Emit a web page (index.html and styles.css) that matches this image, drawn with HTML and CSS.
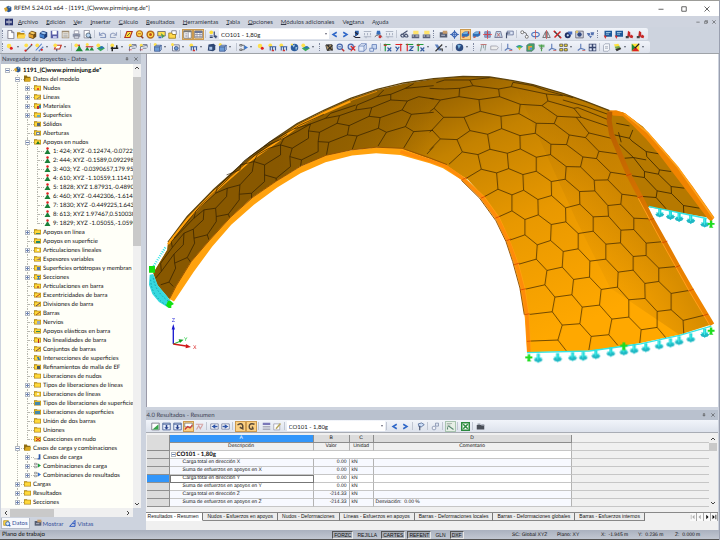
FILE: index.html
```html
<!DOCTYPE html>
<html lang="es">
<head>
<meta charset="utf-8">
<title>RFEM 5.24.01 x64</title>
<link rel="stylesheet" href="styles.css">
</head>
<body>
<svg class="defs" aria-hidden="true">
<symbol id="app" viewBox="0 0 12 12"><path fill="#2b5690" d="M3 3 7 1l4 2v6L7 11 3 9z"/><path fill="#d7a430" d="M0 5l4-2 2 5-4 2z"/><path fill="#8fb7dc" d="M6 3l2-1 2 1-2 2z"/></symbol>
<symbol id="mdi" viewBox="0 0 12 12"><path fill="#26316e" d="M0 1h12v10H0z"/><path stroke="#fff" d="M6 2v8M2 6h8M3 4v4M9 4v4"/></symbol>
<symbol id="new" viewBox="0 0 12 12"><path fill="#fff" stroke="#667" d="M2.500.5h5l3 3v8h-8z"/><path fill="none" stroke="#667" d="M7.500.5v3h3"/></symbol>
<symbol id="open" viewBox="0 0 12 12"><path fill="#b8860b" d="M0 3h4l1 1h5v7H0z"/><path fill="#ffd64d" d="M2 6h10l-2 5H0z"/><path fill="none" stroke="#3b6fc4" d="M6 2q3-2 4 1"/></symbol>
<symbol id="box" viewBox="0 0 12 12"><path fill="#6c4a16" d="M1 4l4-3 6 2v6l-4 3-6-2z"/><path fill="#e5a22e" d="M1 5l6 2v4l-6-2z"/><path fill="#f8cb62" d="M2 4l3-2 5 2-3 2z"/></symbol>
<symbol id="boxb" viewBox="0 0 12 12"><path fill="#1c3c78" d="M1 4l4-3 6 2v6l-4 3-6-2z"/><path fill="#4381cf" d="M1 5l6 2v4l-6-2z"/><path fill="#9cc3ef" d="M2 4l3-2 5 2-3 2z"/></symbol>
<symbol id="save" viewBox="0 0 12 12"><path fill="#5b5fa8" d="M1 1h10v10H1z"/><path fill="#fff" d="M3 1h6v5H3z"/><path fill="#c4c7ea" d="M4 8h5v3H4z"/></symbol>
<symbol id="clip" viewBox="0 0 12 12"><path fill="#9c8a70" d="M1 1h10v10H1z"/><path fill="#f5f1e8" d="M2 3h8v7H2z"/><path stroke="#9a9a9a" d="M3 5h6M3 7h6M3 9h6"/></symbol>
<symbol id="print" viewBox="0 0 12 12"><path fill="#fff" stroke="#889" d="M3 1h6v4H3z"/><path fill="#8b93a8" d="M1 5h10v4H1z"/><path fill="#dfe4f0" stroke="#778" d="M3 8h6v3H3z"/></symbol>
<symbol id="prev" viewBox="0 0 12 12"><path fill="#fff" stroke="#778" d="M1.500.5h7v10h-7z"/><circle cx="7" cy="7" r="3" fill="#b7d4f2" stroke="#456"/><path stroke="#345" stroke-width="2" d="M9 9l2 2"/></symbol>
<symbol id="undo" viewBox="0 0 12 12"><path fill="none" stroke="#8b9bc0" stroke-width="1.500" d="M2 3v4h4M2 7q4-5 8-1v4H3"/></symbol>
<symbol id="redo" viewBox="0 0 12 12"><path fill="none" stroke="#9aa7c4" stroke-width="1.500" d="M10 3v4H6M10 7Q6 2 2 6v4h7"/></symbol>
<symbol id="para" viewBox="0 0 12 12"><path fill="#ffe23a" stroke="#b03020" stroke-width="1.500" d="M4 2h7L8 10H1z"/><path stroke="#334" d="M4 8l4-4"/></symbol>
<symbol id="find" viewBox="0 0 12 12"><circle cx="6" cy="5" r="4" fill="#ffe04a" stroke="#b86a20" stroke-width="1.500"/><path stroke="#8a3a20" stroke-width="2" d="M8 8l3 3"/><path stroke="#a33" d="M4 5h4"/></symbol>
<symbol id="dat" viewBox="0 0 12 12"><path fill="#ffd84a" stroke="#b08a1a" d="M1 2.500h7v7H1z"/><circle cx="7" cy="7" r="3" fill="#d8ecfa" stroke="#3a6ab8" stroke-width="1.500"/><path stroke="#3a6ab8" stroke-width="2" d="M9 9l2 2"/></symbol>
<symbol id="ring" viewBox="0 0 12 12"><circle cx="6" cy="6" r="4.500" fill="#ffe04a" stroke="#b86a20" stroke-width="2"/><circle cx="6" cy="6" r="2" fill="#c24a20"/></symbol>
<symbol id="scr" viewBox="0 0 12 12"><path fill="#ffe04a" stroke="#556" d="M1 2h10v6H1z"/><path fill="#4a9a50" d="M5 4l5 4-3 3z"/><path fill="#3a68c0" d="M2 9h4v2H2z"/></symbol>
<symbol id="fold" viewBox="0 0 12 12"><path fill="#fff" stroke="#667" d="M5 1h6v5H5z"/><path fill="#ffd84a" stroke="#98740e" d="M1 4h4l1 2h4v5H1z"/></symbol>
<symbol id="win" viewBox="0 0 12 12"><path fill="#fff" stroke="#666" d="M1 1h10v10H1z"/><path fill="#777" d="M1 1h10v2H1z"/><path stroke="#889" d="M3 5h3M3 7h3M3 9h3M7 3v8"/></symbol>
<symbol id="tbl" viewBox="0 0 12 12"><path fill="#fff" stroke="#667" d="M1 1.500h10v9H1z"/><path fill="#6b7697" d="M1 1h10v3H1z"/><path stroke="#889" d="M1 6h10M1 8.500h10M4 4v6M8 4v6"/></symbol>
<symbol id="lc" viewBox="0 0 12 12"><circle cx="3" cy="3" r="2.500" fill="#ffdf36"/><path fill="none" stroke="#33456e" stroke-width="1.500" d="M7 2v7h4M9 7v4M1 8h4M1 10h4"/></symbol>
<symbol id="lt" viewBox="0 0 12 12"><path fill="none" stroke="#2d66c8" stroke-width="2" d="M9 3L4 6l5 3"/></symbol>
<symbol id="gt" viewBox="0 0 12 12"><path fill="none" stroke="#2d66c8" stroke-width="2" d="M3 3l5 3-5 3"/></symbol>
<symbol id="res" viewBox="0 0 12 12"><path fill="#2c5fa8" d="M4 1h5v4L6 8H4z"/><path fill="none" stroke="#223" stroke-width="1.500" d="M2 8l3 2h6M4 3l4 3"/></symbol>
<symbol id="val" viewBox="0 0 12 12"><path fill="none" stroke="#9aa3b4" d="M1 2h10M2 4v3M6 4v3M10 4v3M1 9h10M4 9v2"/></symbol>
<symbol id="eye" viewBox="0 0 12 12"><path fill="#356dba" d="M4 1h4l1 5H3z"/><path fill="none" stroke="#333" d="M1 9q5-5 10 0"/><circle cx="8" cy="9" r="2" fill="#c33"/></symbol>
<symbol id="glas" viewBox="0 0 12 12"><path fill="none" stroke="#44506e" stroke-width="1.500" d="M1 7q2-3 4 0t-3 2zM6 7q2-3 4 0t-3 2zM4 5l6-4"/></symbol>
<symbol id="calc" viewBox="0 0 12 12"><path fill="#ffe36a" d="M3 1h7v5H3z"/><path fill="#59617a" d="M1 6h10v5H1z"/><path stroke="#fff" d="M2 8h2M6 8h4"/></symbol>
<symbol id="dark" viewBox="0 0 12 12"><path fill="#555e72" d="M1 3h10v7H1z"/><path fill="#c79b68" d="M5 1h6v4H5z"/><path stroke="#dde" d="M3 7h5"/></symbol>
<symbol id="node" viewBox="0 0 12 12"><path fill="#cfe0fa" stroke="#3561b2" stroke-width="1.500" d="M6 2l4 4-4 4-4-4z"/><path stroke="#3561b2" d="M6 0v12M0 6h12"/></symbol>
<symbol id="surf" viewBox="0 0 12 12"><path fill="#2f6fb8" d="M1 5l4-3h6v5L8 9H1z"/><path fill="#8cc4ea" d="M2 5l3-2h5L8 5z"/><path fill="none" stroke="#c0392b" stroke-width="1.500" d="M2 10l3-1M10 2v3"/></symbol>
<symbol id="grid" viewBox="0 0 12 12"><path fill="#33498c" d="M2 2h8v8H2z"/><path stroke="#e44" d="M0 6h12M6 0v12"/><path fill="#cde" d="M3 3h2v2H3zM7 3h2v2H7zM3 7h2v2H3zM7 7h2v2H7z"/></symbol>
<symbol id="warp" viewBox="0 0 12 12"><path fill="#bcd6e8" stroke="#668" d="M3 2h6l2 8H1z"/><path fill="none" stroke="#c55" d="M4 4l4 5M8 4L4 9"/></symbol>
<symbol id="flag" viewBox="0 0 12 12"><path fill="#dfe8f8" stroke="#55648c" d="M3 1.500h8v5H3z"/><path fill="none" stroke="#44506e" stroke-width="1.500" d="M2 11V4h5"/></symbol>
<symbol id="move" viewBox="0 0 12 12"><circle cx="3" cy="3" r="2" fill="#fff" stroke="#555"/><circle cx="9" cy="9" r="2" fill="#fff" stroke="#555"/><path fill="none" stroke="#555" d="M5 3q4 0 4 4"/></symbol>
<symbol id="rot" viewBox="0 0 12 12"><ellipse cx="6" cy="6" rx="5" ry="3" fill="none" stroke="#4a74c0" stroke-width="1.500"/><path stroke="#c44" d="M6 0v12"/></symbol>
<symbol id="mir" viewBox="0 0 12 12"><path fill="#e8e8f2" stroke="#555" d="M5 2v8H1zM7 2v8h4z"/><path stroke="#c44" d="M6 0v12"/></symbol>
<symbol id="xx" viewBox="0 0 12 12"><path stroke="#444" stroke-width="2" d="M2 2l8 8"/><path stroke="#d32222" stroke-width="2" d="M10 2l-8 8M1 1l2 2M9 9l2 2"/></symbol>
<symbol id="ball" viewBox="0 0 12 12"><circle cx="5" cy="7" r="4" fill="#1d2e63"/><path fill="#456bc0" d="M5 2h6v4H7z"/><circle cx="5" cy="7" r="1.500" fill="#cde"/></symbol>
<symbol id="cam" viewBox="0 0 12 12"><path fill="#d8dbe4" stroke="#556" d="M1 1.500h10v9H1z"/><circle cx="6" cy="6" r="3" fill="#334a80"/><path fill="#e2c66a" d="M1 1h3v3H1z"/></symbol>
<symbol id="tri" viewBox="0 0 12 12"><path fill="#5673b0" d="M1 4h4l1 3-3 1zM6 3h5l-1 4H7zM4 8h4l-2 3z"/></symbol>
<symbol id="mod" viewBox="0 0 12 12"><path fill="#1e5a9a" d="M2 1h10v8H2z"/><path fill="#bfe0f4" d="M4 3h6v1H4zM4 5h4v1H4z"/><path fill="#c33" d="M1 7l4 1-2 4z"/></symbol>
<symbol id="modr" viewBox="0 0 12 12"><path fill="#c62828" d="M4 1l3 2v6H3zM8 6l3 2-1 3-4-1z"/><path fill="#444" d="M1 8h4v3H1z"/></symbol>
<symbol id="nd" viewBox="0 0 12 12"><circle cx="4" cy="4" r="3" fill="#ffe04a"/><circle cx="7" cy="7" r="2" fill="#d22"/></symbol>
<symbol id="ln" viewBox="0 0 12 12"><circle cx="3" cy="3" r="2.500" fill="#ffe04a"/><path stroke="#5a6172" stroke-width="1.500" d="M2 11l9-9"/><circle cx="2" cy="10" r="1.500" fill="#d22"/><circle cx="10" cy="2" r="1" fill="#d22"/></symbol>
<symbol id="ln2" viewBox="0 0 12 12"><circle cx="3" cy="3" r="2.500" fill="#ffe04a"/><path stroke="#5b82c8" stroke-width="1.500" d="M1 10l8-9M5 11l6-6"/><circle cx="9" cy="9" r="1.500" fill="#d22"/></symbol>
<symbol id="srf" viewBox="0 0 12 12"><path fill="#fff" stroke="#c0392b" stroke-width="1.500" d="M4 3h7L9 8H2z"/><circle cx="3" cy="3" r="2.500" fill="#ffe04a"/><path stroke="#44506e" stroke-width="1.500" d="M5 8v3"/></symbol>
<symbol id="sup" viewBox="0 0 12 12"><circle cx="3" cy="3" r="2.500" fill="#ffe04a"/><path fill="#1f8a3a" d="M7 2l2 5 3 4H2l3-4z"/><path stroke="#d33" stroke-width="1.500" d="M5 3h3"/></symbol>
<symbol id="sup2" viewBox="0 0 12 12"><circle cx="3" cy="2" r="2" fill="#ffe04a"/><path fill="#1f8a3a" d="M3 5l3 5H0zM9 5l3 5H6z"/><path stroke="#c33" stroke-width="1.500" d="M1 5h10"/></symbol>
<symbol id="sup3" viewBox="0 0 12 12"><circle cx="3" cy="3" r="2.500" fill="#ffe04a"/><path fill="#3aa85a" d="M1 7l6-3 5 3-6 4z"/><path fill="#2a73b8" d="M4 6l4-2 3 2-4 2z"/></symbol>
<symbol id="bar" viewBox="0 0 12 12"><circle cx="3" cy="3" r="2.500" fill="#ffe04a"/><path stroke="#222" stroke-width="2" d="M1 7h10M3 5v6M9 3v4"/></symbol>
<symbol id="dim" viewBox="0 0 12 12"><circle cx="3" cy="3" r="2" fill="#ffe04a"/><path fill="none" stroke="#59617a" d="M2 11V5l9-2v3M5 7h5M5 2h6"/><path stroke="#c44" d="M1 9h4"/></symbol>
<symbol id="cube" viewBox="0 0 12 12"><circle cx="3" cy="2" r="2" fill="#ffe04a"/><path fill="#6c9ad4" stroke="#3d5990" d="M2 5h7v6H2z"/><path fill="#b9d2f0" stroke="#3d5990" d="M2 5l2-2h7L9 5zM9 5l2-2v6l-2 2z"/></symbol>
<symbol id="cub3" viewBox="0 0 12 12"><path fill="#2e4672" d="M2 2l7-1 2 2v6l-3 2-7-1z"/><path fill="#a9c5e8" d="M3 5h4v4H3z"/></symbol>
<symbol id="gen" viewBox="0 0 12 12"><path fill="#f4f6fb" stroke="#59617a" d="M2 2.500h9v8H2z"/><circle cx="2" cy="2" r="2" fill="#ffe04a"/><circle cx="7" cy="7" r="2.500" fill="#6c9ad4" stroke="#334a80"/></symbol>
<symbol id="load" viewBox="0 0 12 12"><circle cx="3" cy="3" r="2.500" fill="#ffe04a"/><path fill="none" stroke="#3b5d9c" stroke-width="1.500" d="M2 5h9M3 5v5M6 5v5M10 5v5"/><path fill="#c33" d="M5 9h3v2H5z"/></symbol>
<symbol id="comb" viewBox="0 0 12 12"><path fill="none" stroke="#555" d="M1 2h3v2H1zM1 8h3v2H1zM4 3h3v6H4"/><path fill="#3a74c8" d="M7 3l5 3-5 3z"/></symbol>
<symbol id="globe" viewBox="0 0 12 12"><circle cx="6" cy="6" r="5" fill="#2c5c9c"/><path fill="#a8d0e8" d="M3 3l4-1-2 4zM7 6l3-1-2 5z"/><path fill="#ffe04a" d="M1 1h3v2H1z"/></symbol>
<symbol id="mesh" viewBox="0 0 12 12"><path fill="#b89a6a" stroke="#333" d="M1 3l8-1 1 7-7 1z"/><path stroke="#333" stroke-width="1.500" d="M2 2l8 8M10 3l-7 7M5 2v8"/></symbol>
<symbol id="zoom" viewBox="0 0 12 12"><circle cx="5" cy="5" r="3.500" fill="#cfe2fa" stroke="#4a66a8" stroke-width="1.500"/><path stroke="#b33" stroke-width="2" d="M8 8l3 3"/><path stroke="#34508c" d="M3 5h4"/></symbol>
<symbol id="zoomx" viewBox="0 0 12 12"><circle cx="5" cy="5" r="3.500" fill="#cfe2fa" stroke="#4a66a8" stroke-width="1.500"/><path stroke="#d22" stroke-width="1.500" d="M5 4l6 6M11 4L5 11"/></symbol>
<symbol id="wire" viewBox="0 0 12 12"><path fill="#e6edfa" stroke="#5b78b4" d="M1 4h7v7H1zM4 1h7v7M1 4l3-3M8 4l3-3M8 11l3-3"/></symbol>
<symbol id="wire2" viewBox="0 0 12 12"><path fill="#c6d5f0" stroke="#5b78b4" d="M4 2h6v6H4z"/><path fill="#dfe8f8" stroke="#5b78b4" d="M1 7h5v4H1z"/></symbol>
<symbol id="vx" viewBox="0 0 12 12"><path stroke="#1f9a3a" stroke-width="1.500" d="M3 1v10M1 2h9"/><path stroke="#d22" stroke-width="1.500" d="M1 3h4"/><path stroke="#345a9c" stroke-width="1.500" d="M6 6l5 5M11 6l-5 5"/></symbol>
<symbol id="vy" viewBox="0 0 12 12"><path stroke="#d22" stroke-width="1.500" d="M2 2h9M9 1v10"/><path stroke="#345a9c" stroke-width="1.500" d="M2 5l3 3M7 5l-4 6"/></symbol>
<symbol id="vz" viewBox="0 0 12 12"><path stroke="#1f9a3a" stroke-width="1.500" d="M1 2h10"/><path stroke="#d22" stroke-width="1.500" d="M3 1v10"/><path fill="none" stroke="#345a9c" stroke-width="1.500" d="M6 5h5l-5 5h5"/></symbol>
<symbol id="pen" viewBox="0 0 12 12"><path fill="#5c7fbc" d="M1 2h4l5 8H6z"/><path fill="none" stroke="#333" stroke-width="1.500" d="M2 11l9-9M8 8h3v3"/></symbol>
<symbol id="vis" viewBox="0 0 12 12"><path fill="none" stroke="#2d57c0" stroke-width="1.500" d="M1 11L9 2v9zM5 7h4"/></symbol>
<symbol id="sph" viewBox="0 0 12 12"><circle cx="6" cy="6" r="5" fill="#2d4b80"/><path fill="#79b2dc" d="M3 2l5 1-3 5z"/></symbol>
<symbol id="fr" viewBox="0 0 12 12"><path fill="none" stroke="#9aa" stroke-width="1.500" d="M2 11l2-9h5l-1 8M6 2v5"/><path stroke="#c66" d="M2 2h8"/></symbol>
<symbol id="lbl" viewBox="0 0 12 12"><path fill="#eee" stroke="#9a9aa4" d="M1 4h8l2 2-2 3H1z"/></symbol>
<symbol id="axs" viewBox="0 0 12 12"><path fill="none" stroke="#5f7cb8" stroke-width="1.500" d="M5 1v6l6 2M5 7l-4 3"/><path stroke="#c55" d="M7 10h4"/></symbol>
<symbol id="rain" viewBox="0 0 12 12"><path fill="#3f74d8" d="M1 5q5-5 10 0L6 7z"/><path fill="#38b86a" d="M2 5l4-2 4 2-4 3z"/><path fill="#e8c22c" d="M4 6h4l-2 4z"/></symbol>
<symbol id="rain2" viewBox="0 0 12 12"><path fill="#44a368" stroke="#58757a" d="M1 3l3-2h7v7l-3 3H1z"/><path fill="#f0a030" d="M3 4h5v5H3z"/><path fill="#4a8ee0" d="M5 6h3v3H5z"/></symbol>
<symbol id="tre" viewBox="0 0 12 12"><path stroke="#4aa04a" stroke-width="1.500" d="M6 2v9M2 3h8M3 5h7"/><path stroke="#777" d="M4 7h4"/></symbol>
<symbol id="four" viewBox="0 0 12 12"><path fill="#ffe23a" stroke="#444" d="M1 1.500h4v3H1zM7 1.500h4v3H7zM1 7.500h4v3H1zM7 7.500h4v3H7z"/></symbol>
<symbol id="fourb" viewBox="0 0 12 12"><path fill="#37456e" d="M1 1h10v10H1z"/><path fill="#dfe6f6" d="M2 2h3v3H2zM7 2h3v3H7zM2 7h3v3H2zM7 7h3v3H7z"/></symbol>
<symbol id="sheet" viewBox="0 0 12 12"><path fill="#f4f6fa" stroke="#98a0b0" d="M2 3l2-2h6v8l-2 2H2z"/><path stroke="#98a0b0" d="M4 5h4M4 7h4"/></symbol>
<symbol id="hide" viewBox="0 0 12 12"><path stroke="#99a8a0" d="M1 2h7M1 4h5M1 6h4"/><path fill="none" stroke="#5b8a74" stroke-width="1.500" d="M2 10V7M3 5l7 5"/></symbol>
<symbol id="lay" viewBox="0 0 12 12"><path fill="#ffe23a" d="M1 2l6-1 2 3-6 1z"/><path fill="#333" d="M3 8l6-3 2 3-6 3z"/><path fill="#7aa84a" d="M2 5l6-1 2 2-6 2z"/></symbol>
<symbol id="col" viewBox="0 0 12 12"><path fill="#ffe23a" d="M1 1h10v10H1z"/><path fill="#1d8a3a" d="M1 1v10l5-5z"/><path fill="#d22" d="M1 11l5-6 5 6z"/><path stroke="#222" stroke-width="1.500" d="M5 7l6-6"/></symbol>
<symbol id="xls" viewBox="0 0 12 12"><path fill="#2b8a3e" d="M0 0h12v12H0z"/><path fill="#fff" d="M2 2h8v8H2z"/><path stroke="#2b8a3e" stroke-width="2" d="M3 3l6 6M9 3L3 9"/></symbol>
<symbol id="rep" viewBox="0 0 12 12"><path fill="#4a4f58" d="M1 4h10v6H1z"/><path fill="#9aa0ac" d="M2 2h4v2H2zM7 3h4v2H7z"/></symbol>
<symbol id="tgr" viewBox="0 0 12 12"><path fill="#fff" stroke="#667" d="M1 1.500h10v9H1z"/><path fill="#37a34a" d="M2 10l8-7v7z"/></symbol>
<symbol id="tdn" viewBox="0 0 12 12"><path fill="#e8eefb" stroke="#34508c" d="M1 1.500h10v9H1z"/><path stroke="#34508c" d="M1 3h10"/><path fill="#26418c" d="M5 4h2v3h2l-3 3-3-3h2z"/></symbol>
<symbol id="tcur" viewBox="0 0 12 12"><path fill="#fff" stroke="#777" d="M1 1.500h10v5H1z"/><path fill="none" stroke="#c33" stroke-width="1.500" d="M1 10l4-4 3 2 3-4"/></symbol>
<symbol id="tfad" viewBox="0 0 12 12"><path fill="none" stroke="#d4a0a0" stroke-width="1.500" d="M1 3h10M2 10l3-5 2 4 3-5"/></symbol>
<symbol id="tll" viewBox="0 0 12 12"><path fill="#fff" stroke="#6b7697" d="M1 2.500h10v7H1z"/><path fill="#2e55a8" d="M7 3v6L2 6zM7 5h3v2H7z"/></symbol>
<symbol id="trr" viewBox="0 0 12 12"><path fill="#fff" stroke="#6b7697" d="M1 2.500h10v7H1z"/><path fill="#2e55a8" d="M5 3v6l5-3zM2 5h3v2H2z"/></symbol>
<symbol id="mouse" viewBox="0 0 12 12"><path fill="none" stroke="#5a4a38" stroke-width="2" d="M2 4q6-4 7 1v4L5 7"/></symbol>
<symbol id="mous2" viewBox="0 0 12 12"><path fill="none" stroke="#5a4a38" stroke-width="2" d="M10 3Q3 1 3 6q0 5 5 3L7 6"/></symbol>
<symbol id="rows" viewBox="0 0 12 12"><path fill="#7a78b8" d="M1 1h10v3H1z"/><path stroke="#99a" d="M1 6h10M1 8h10M1 10h10"/></symbol>
<symbol id="edit" viewBox="0 0 12 12"><path fill="#fff" stroke="#99a" d="M1 2.500h8v8H1z"/><path stroke="#b8a860" stroke-width="2" d="M4 9l6-7"/></symbol>
<symbol id="filt" viewBox="0 0 12 12"><path fill="#cfe0f8" stroke="#4a6290" d="M3 2.500q5-3 8 1l-4 3H4z"/><path stroke="#44506e" stroke-width="1.500" d="M5 5v6"/></symbol>
<symbol id="link" viewBox="0 0 12 12"><path fill="#dfe6f4" stroke="#7d8ba8" d="M6 1.500h4v4H6z"/><circle cx="4" cy="8" r="2.500" fill="#f2f4fa" stroke="#7d8ba8"/></symbol>
<symbol id="fd" viewBox="0 0 12 12"><path fill="#a87f10" d="M0 2h5l1 1h6v8H0z"/><path fill="#ffd93b" d="M1 4h10v6H1z"/></symbol>
<symbol id="fdo" viewBox="0 0 12 12"><path fill="#8f6d10" d="M0 1h5l1 2h5v8H0z"/><path fill="#d9a91f" d="M3 5h9l-2 6H1z"/></symbol>
<symbol id="ns" viewBox="0 0 12 14"><path fill="#1a8038" d="M6 4l3 5 3 5H0l3-5z"/><circle cx="6" cy="3" r="2.500" fill="#e02020"/></symbol>
<symbol id="cas" viewBox="0 0 12 12"><path stroke="#777" d="M0 10h6"/><path fill="#2d57a8" d="M8 2h3v9H6V9h2z"/></symbol>
<symbol id="cmg" viewBox="0 0 14 12"><path fill="#fff" stroke="#555" d="M1 1.500h4v3H1zM1 7.500h4v3H1zM6 3h2v6H6"/><path fill="#19a03a" d="M8 2l6 4-6 4z"/></symbol>
<symbol id="cmb" viewBox="0 0 14 12"><path fill="#fff" stroke="#555" d="M1 1.500h4v3H1zM1 7.500h4v3H1zM6 3h2v6H6"/><path fill="#2f6fd0" d="M8 2l6 4-6 4z"/></symbol>
<symbol id="mincap" viewBox="0 0 12 12"><path stroke="#333" stroke-width="1.500" d="M1 6.500h10"/></symbol>
<symbol id="maxcap" viewBox="0 0 12 12"><path fill="none" stroke="#333" stroke-width="1.500" d="M1.500 1.500h9v9h-9z"/></symbol>
<symbol id="rescap" viewBox="0 0 12 12"><path fill="none" stroke="#444" stroke-width="1.500" d="M3 4V2h8v6H9M1 5h8v5H1z"/></symbol>
<symbol id="clscap" viewBox="0 0 12 12"><path stroke="#333" stroke-width="1.500" d="M1 1l10 10M11 1L1 11"/></symbol>
<symbol id="pin" viewBox="0 0 12 12"><path fill="none" stroke="#555" stroke-width="1.500" d="M3 2h6M4 2v5h4V2M2 7h8M6 7v4"/></symbol>
<symbol id="arr" viewBox="0 0 12 12"><path fill="#1fd8d8" d="M4 0h4v5h3L6 12 1 5h3z"/><path fill="#20b8c4" d="M0 7l6-1 6 1-2 3-4 1-4-1z"/><path fill="#58eeee" d="M5 1h1v7H5z"/></symbol>
<symbol id="crs" viewBox="0 0 12 12"><path fill="#1fdc1f" d="M4 0h4v4h4v3H8v3l2 2H3l1-5H0V4h4z"/></symbol>
</svg>

<header class="title"><svg class="i"><use href="#app"/></svg><h1>RFEM 5.24.01 x64 - [1191_(C)www.pirminjung.de*]</h1>
<div class="caps"><button aria-label="Minimizar"><svg><use href="#mincap"/></svg></button><button aria-label="Maximizar"><svg><use href="#maxcap"/></svg></button><button aria-label="Cerrar"><svg><use href="#clscap"/></svg></button></div></header>
<nav class="menu"><svg class="i"><use href="#mdi"/></svg>
<button><u>A</u>rchivo</button><button><u>E</u>dición</button><button><u>V</u>er</button><button><u>I</u>nsertar</button><button><u>C</u>álculo</button><button><u>R</u>esultados</button><button><u>H</u>erramientas</button><button><u>T</u>abla</button><button><u>O</u>pciones</button><button><u>M</u>ódulos adicionales</button><button>Ve<u>n</u>tana</button><button>A<u>y</u>uda</button>
<div class="caps mdi"><button aria-label="Minimizar modelo"><svg><use href="#mincap"/></svg></button><button aria-label="Restaurar modelo"><svg><use href="#rescap"/></svg></button><button aria-label="Cerrar modelo"><svg><use href="#clscap"/></svg></button></div></nav>

<div class="bars">
<div class="bar" role="toolbar" aria-label="Estándar"><i class="grip"></i>
<button aria-label="Nuevo"><svg><use href="#new"/></svg></button><button aria-label="Abrir"><svg><use href="#open"/></svg></button><button aria-label="Proyecto"><svg><use href="#box"/></svg></button><button aria-label="Bloques"><svg><use href="#boxb"/></svg></button><button aria-label="Guardar"><svg><use href="#save"/></svg></button><button aria-label="Portapapeles"><svg><use href="#clip"/></svg></button><button aria-label="Imprimir"><svg><use href="#print"/></svg></button><button aria-label="Vista previa"><svg><use href="#prev"/></svg></button><i class="sep"></i><button aria-label="Deshacer"><svg><use href="#undo"/></svg></button><button aria-label="Rehacer"><svg><use href="#redo"/></svg></button><i class="sep"></i><button aria-label="Plano"><svg><use href="#para"/></svg></button><button aria-label="Buscar"><svg><use href="#find"/></svg></button><button aria-label="Rueda"><svg><use href="#ring"/></svg></button><button aria-label="Pantalla"><svg><use href="#scr"/></svg></button><button aria-label="Carpeta"><svg><use href="#fold"/></svg></button><i class="sep"></i><button class="on" aria-label="Navegador"><svg><use href="#win"/></svg></button><button class="on" aria-label="Tablas"><svg><use href="#tbl"/></svg></button><i class="sep"></i><button aria-label="Caso nuevo"><svg><use href="#lc"/></svg></button>
<div class="combo"><select aria-label="Caso de carga"><option>CO101 - 1,80g</option></select></div>
<button aria-label="Anterior"><svg><use href="#lt"/></svg></button><button aria-label="Siguiente"><svg><use href="#gt"/></svg></button><button aria-label="Resultados"><svg><use href="#res"/></svg></button><button aria-label="Valores"><svg><use href="#val"/></svg></button><button aria-label="Ver"><svg><use href="#eye"/></svg></button><button aria-label="Escala"><svg><use href="#val"/></svg></button><i class="sep"></i><button aria-label="Gafas"><svg><use href="#glas"/></svg></button><button aria-label="Calcular"><svg><use href="#calc"/></svg></button><button aria-label="Calcular todo"><svg><use href="#calc"/></svg></button><i class="sep grip"></i><button aria-label="Panel"><svg><use href="#dark"/></svg></button><button aria-label="Rejilla"><svg><use href="#node"/></svg></button><button class="on" aria-label="Sólido"><svg><use href="#surf"/></svg></button><button aria-label="Superficie"><svg><use href="#surf"/></svg></button><button aria-label="Malla"><svg><use href="#grid"/></svg></button><button aria-label="Deformar"><svg><use href="#warp"/></svg></button><button aria-label="Marca"><svg><use href="#flag"/></svg></button><i class="sep"></i><button aria-label="Mover"><svg><use href="#move"/></svg></button><button aria-label="Girar"><svg><use href="#rot"/></svg></button><button aria-label="Simetría"><svg><use href="#mir"/></svg></button><button aria-label="Dividir"><svg><use href="#xx"/></svg></button><button aria-label="Esfera"><svg><use href="#ball"/></svg></button><button aria-label="Cámara"><svg><use href="#cam"/></svg></button><button aria-label="Grupo"><svg><use href="#tri"/></svg></button><i class="sep grip"></i><button aria-label="Módulo 1"><svg><use href="#mod"/></svg></button><button aria-label="Módulo 2"><svg><use href="#mod"/></svg></button><button aria-label="Módulo 3"><svg><use href="#modr"/></svg></button><button aria-label="Módulo 4"><svg><use href="#modr"/></svg></button></div>

<div class="bar tight" role="toolbar" aria-label="Insertar"><i class="grip"></i>
<button class="dd" aria-label="Nudo"><svg><use href="#nd"/></svg></button><button aria-label="Línea"><svg><use href="#ln"/></svg></button><button class="dd" aria-label="Barra"><svg><use href="#ln2"/></svg></button><button class="dd" aria-label="Superficie"><svg><use href="#srf"/></svg></button><i class="sep"></i><button aria-label="Apoyo nudo"><svg><use href="#sup"/></svg></button><button aria-label="Apoyo línea"><svg><use href="#sup2"/></svg></button><button aria-label="Apoyo superficie"><svg><use href="#sup3"/></svg></button><i class="sep"></i><button class="dd" aria-label="Sección"><svg><use href="#bar"/></svg></button><button aria-label="Cota"><svg><use href="#dim"/></svg></button><button aria-label="Línea guía"><svg><use href="#dim"/></svg></button><i class="sep"></i><button class="dd" aria-label="Sólido nuevo"><svg><use href="#cube"/></svg></button><button class="dd" aria-label="Generar"><svg><use href="#gen"/></svg></button><button class="dd" aria-label="Carga nodal"><svg><use href="#load"/></svg></button><button aria-label="Cubo"><svg><use href="#cub3"/></svg></button><button class="dd" aria-label="Copiar"><svg><use href="#cube"/></svg></button><i class="sep"></i><button class="dd" aria-label="Combinación"><svg><use href="#comb"/></svg></button><button aria-label="Carga"><svg><use href="#nd"/></svg></button><button aria-label="Carga de línea"><svg><use href="#load"/></svg></button><button aria-label="Carga de barra"><svg><use href="#load"/></svg></button><button aria-label="Carga de superficie"><svg><use href="#globe"/></svg></button><button class="dd" aria-label="Carga libre"><svg><use href="#sup3"/></svg></button><i class="sep grip"></i><button aria-label="Generar malla"><svg><use href="#mesh"/></svg></button><button aria-label="Acercar"><svg><use href="#zoom"/></svg></button><button aria-label="Ver todo"><svg><use href="#zoomx"/></svg></button><button aria-label="Isométrica"><svg><use href="#wire"/></svg></button><button aria-label="Perspectiva"><svg><use href="#wire2"/></svg></button><i class="sep"></i><button aria-label="Vista X"><svg><use href="#vx"/></svg></button><button aria-label="Vista Y"><svg><use href="#vy"/></svg></button><button aria-label="Vista Z"><svg><use href="#vz"/></svg></button><button class="dd" aria-label="Vista -X"><svg><use href="#vx"/></svg></button><button class="dd" aria-label="Lápiz"><svg><use href="#pen"/></svg></button><i class="sep"></i><button class="dd" aria-label="Representación"><svg><use href="#sph"/></svg></button><i class="sep grip"></i><button aria-label="Marco"><svg><use href="#fr"/></svg></button><button aria-label="Etiqueta"><svg><use href="#lbl"/></svg></button><i class="sep"></i><button aria-label="Ejes"><svg><use href="#axs"/></svg></button><button aria-label="Isobandas"><svg><use href="#rain"/></svg></button><button aria-label="Isosólidos"><svg><use href="#rain2"/></svg></button><button aria-label="Árbol"><svg><use href="#tre"/></svg></button><button aria-label="Plano de corte"><svg><use href="#axs"/></svg></button><button class="dd" aria-label="Ventanas"><svg><use href="#four"/></svg></button><button aria-label="Origen"><svg><use href="#axs"/></svg></button><button aria-label="Cuadrícula"><svg><use href="#fourb"/></svg></button><i class="sep"></i><button aria-label="Hoja"><svg><use href="#sheet"/></svg></button><button class="dd" aria-label="Capas"><svg><use href="#lay"/></svg></button><button class="dd" aria-label="Colores"><svg><use href="#col"/></svg></button></div>
</div>

<main class="work">
<aside class="navi">
<div class="phead"><h2>Navegador de proyectos - Datos</h2><svg><use href="#pin"/></svg><svg><use href="#clscap"/></svg></div>
<div class="treebox">
<div class="tree">
<ul class="root"><li><button class="ex minus" aria-label="Contraer"></button><svg><use href="#app"/></svg><b>1191_(C)www.pirminjung.de*</b>
<ul>
<li><button class="ex minus" aria-label="Contraer"></button><svg><use href="#fdo"/></svg>Datos del modelo
<ul>
<li><button class="ex" aria-label="Expandir"></button><svg><use href="#fd"/><circle cx="4" cy="5" r="1" fill="#d22"/></svg>Nudos</li>
<li><button class="ex" aria-label="Expandir"></button><svg><use href="#fd"/><path stroke="#876" d="M3 6l4-3"/></svg>Líneas</li>
<li><button class="ex" aria-label="Expandir"></button><svg><use href="#fd"/><path fill="#b33" d="M3 4h2v3H3z"/><path fill="#38a" d="M5 3h2v3H5z"/></svg>Materiales</li>
<li><button class="ex" aria-label="Expandir"></button><svg><use href="#fd"/><path fill="#6ab" d="M3 4h3v2H3z"/></svg>Superficies</li>
<li><svg><use href="#fd"/><path fill="#567" d="M3 3h3v3H3z"/></svg>Sólidos</li>
<li><svg><use href="#fd"/><path fill="#789" d="M2 3h4v3H2z"/><path fill="#ffd" d="M3 4h2v1H3z"/></svg>Aberturas</li>
<li><button class="ex minus" aria-label="Contraer"></button><svg><use href="#fd"/><path fill="#272" d="M4 3l2 3H2z"/></svg>Apoyos en nudos
<ul>
<li><svg><use href="#ns"/></svg>1: 424; XYZ -0.12474,-0.0722758</li>
<li><svg><use href="#ns"/></svg>2: 444; XYZ -0.1589,0.0922984,5</li>
<li><svg><use href="#ns"/></svg>3: 403; YZ -0.0390657,179.956 °,</li>
<li><svg><use href="#ns"/></svg>4: 610; XYZ -1.10559,1.11417,44</li>
<li><svg><use href="#ns"/></svg>5: 1828; XYZ 1.87931,-0.489018,</li>
<li><svg><use href="#ns"/></svg>6: 460; XYZ -0.442306,-1.61422,</li>
<li><svg><use href="#ns"/></svg>7: 1830; XYZ -0.449225,1.64378,</li>
<li><svg><use href="#ns"/></svg>8: 613; XYZ 1.97467,0.510038,-7</li>
<li><svg><use href="#ns"/></svg>9: 1829; XYZ -1.05055,-1.05909,</li>
</ul></li>
<li><button class="ex" aria-label="Expandir"></button><svg><use href="#fd"/><path fill="#486" d="M2 5h4v1H2z"/></svg>Apoyos en línea</li>
<li><svg><use href="#fd"/><path fill="#286" d="M2 4h4v2H2z"/></svg>Apoyos en superficie</li>
<li><button class="ex" aria-label="Expandir"></button><svg><use href="#fd"/><circle cx="4" cy="4" r="1" fill="#fff"/></svg>Articulaciones lineales</li>
<li><svg><use href="#fd"/><path fill="#976" d="M2 5l4-2v2z"/></svg>Espesores variables</li>
<li><button class="ex" aria-label="Expandir"></button><svg><use href="#fd"/><path fill="#57a" d="M3 3h3v3H3z"/></svg>Superficies ortótropas y membran</li>
<li><button class="ex" aria-label="Expandir"></button><svg><use href="#fd"/><path stroke="#37b" d="M3 3.500h3M4.500 3v3M3 6h3"/></svg>Secciones</li>
<li><svg><use href="#fd"/><circle cx="4" cy="5" r="1" fill="#b52"/></svg>Articulaciones en barra</li>
<li><svg><use href="#fd"/><path stroke="#b42" d="M2 6l4-3"/></svg>Excentricidades de barra</li>
<li><svg><use href="#fd"/><path stroke="#645" d="M2 6l4-3"/></svg>Divisiones de barra</li>
<li><button class="ex" aria-label="Expandir"></button><svg><use href="#fd"/><path stroke="#a52" d="M2 6l4-3"/></svg>Barras</li>
<li><svg><use href="#fd"/><path fill="#9ab" d="M3 3h3v3H3z"/></svg>Nervios</li>
<li><svg><use href="#fd"/><path fill="#385" d="M2 4h4v1H2z"/></svg>Apoyos elásticos en barra</li>
<li><svg><use href="#fd"/><path stroke="#b22" d="M4.500 3v4"/></svg>No linealidades de barra</li>
<li><svg><use href="#fd"/><path stroke="#744" d="M2 6l4-3"/></svg>Conjuntos de barras</li>
<li><svg><use href="#fd"/><path fill="#37a" d="M3 3h2l1 3H4z"/></svg>Intersecciones de superficies</li>
<li><svg><use href="#fd"/><path fill="#456" d="M3 3h3v3H3z"/></svg>Refinamientos de malla de EF</li>
<li><svg><use href="#fd"/></svg>Liberaciones de nudos</li>
<li><button class="ex" aria-label="Expandir"></button><svg><use href="#fd"/></svg>Tipos de liberaciones de líneas</li>
<li><button class="ex" aria-label="Expandir"></button><svg><use href="#fd"/><circle cx="4" cy="4" r="1" fill="#fff"/></svg>Liberaciones de líneas</li>
<li><svg><use href="#fd"/><path fill="#48a" d="M1 3h5v3H1z"/></svg>Tipos de liberaciones de superficie</li>
<li><svg><use href="#fd"/><path fill="#48a" d="M1 3h5v3H1z"/></svg>Liberaciones de superficies</li>
<li><svg><use href="#fd"/></svg>Unión de dos barras</li>
<li><svg><use href="#fd"/></svg>Uniones</li>
<li><svg><use href="#fd"/><path stroke="#c22" d="M2 3l4 3M6 3L2 6"/></svg>Coacciones en nudo</li>
</ul></li>
<li><button class="ex minus" aria-label="Contraer"></button><svg><use href="#fdo"/></svg>Casos de carga y combinaciones
<ul>
<li><button class="ex" aria-label="Expandir"></button><svg><use href="#cas"/></svg>Casos de carga</li>
<li><button class="ex" aria-label="Expandir"></button><svg><use href="#cmg"/></svg>Combinaciones de carga</li>
<li><button class="ex" aria-label="Expandir"></button><svg><use href="#cmb"/></svg>Combinaciones de resultados</li>
</ul></li>
<li><button class="ex" aria-label="Expandir"></button><svg><use href="#fd"/></svg>Cargas</li>
<li><button class="ex" aria-label="Expandir"></button><svg><use href="#fd"/></svg>Resultados</li>
<li><button class="ex" aria-label="Expandir"></button><svg><use href="#fd"/></svg>Secciones</li>
</ul></li></ul>
</div>
<div class="vbar"><svg viewBox="0 0 8 8"><path d="M2 5l2-2 2 2"/></svg><i class="thumb"></i><svg viewBox="0 0 8 8"><path d="M2 3l2 2 2-2"/></svg></div>
</div>
<div class="hbar"><svg viewBox="0 0 8 8"><path d="M5 2L3 4l2 2"/></svg><i class="thumb"></i><svg viewBox="0 0 8 8"><path d="M3 2l2 2-2 2"/></svg></div>
<div class="ntabs"><button class="act"><svg><use href="#dat"/></svg>Datos</button><button><svg><use href="#dark"/></svg>Mostrar</button><button><svg><use href="#vis"/></svg>Vistas</button></div>
</aside>

<section class="right">
<div class="view">
<svg viewBox="9 -3 1716 1059" preserveAspectRatio="xMinYMin meet" role="img" aria-label="Modelo">
<defs>
<linearGradient id="g1" gradientUnits="userSpaceOnUse" x1="780" y1="60" x2="1160" y2="880"><stop offset="0" stop-color="#8a5a00"/><stop offset=".12" stop-color="#9c6600"/><stop offset=".3" stop-color="#c48200"/><stop offset=".6" stop-color="#e89800"/><stop offset="1" stop-color="#ffa800"/></linearGradient>
<linearGradient id="g2" gradientUnits="userSpaceOnUse" x1="400" y1="0" x2="860" y2="0"><stop offset="0" stop-color="#885800"/><stop offset=".5" stop-color="#905f00" stop-opacity=".8"/><stop offset="1" stop-color="#905f00" stop-opacity="0"/></linearGradient>
<linearGradient id="g3" gradientUnits="userSpaceOnUse" x1="1200" y1="460" x2="1400" y2="340"><stop offset="0" stop-color="#b07000" stop-opacity="0"/><stop offset="1" stop-color="#a86c00" stop-opacity=".45"/></linearGradient>
<linearGradient id="g4" gradientUnits="userSpaceOnUse" x1="540" y1="170" x2="800" y2="700"><stop offset="0" stop-color="#b45c00"/><stop offset=".5" stop-color="#d87400"/><stop offset="1" stop-color="#ee8500"/></linearGradient>
</defs>
<path fill="url(#g1)" d="M28 655 70 585 72 565 130 487 210 405 318 308 390 255 460 208 540 168 620 132 700 105 780 86 870 72 958 64 1038 66 1108 77 1168 89 1258 115 1328 140 1398 167 1403 240 1448 350 1483 425 1523 495 1563 565 1608 640 1708 808 1608 840 1488 866 1398 880 1338 888 1155 893 1146 800 1130 700 1113 610 1063 490 1023 430 973 375 908 335 858 312 770 282 700 277 620 285 545 303 470 333 400 378 325 427 260 487 195 560 140 625 95 700 78 735 40 690z"/>
<path fill="url(#g2)" d="M28 655 70 585 72 565 130 487 210 405 318 308 390 255 460 208 540 168 620 132 700 105 780 86 860 74V312L770 282 700 277 620 285 545 303 470 333 400 378 325 427 260 487 195 560 140 625 95 700 78 735 40 690z"/>
<path fill="url(#g3)" d="M1108 77 1168 89 1258 115 1328 140 1398 167 1403 240 1448 350 1483 425 1523 495 1563 565 1608 640 1708 808 1608 840 1400 700 1300 500z"/>
<path fill="none" stroke="#5e430c" stroke-width="4" d="M72 562 130 485 210 403 318 306 390 253 460 206 540 166 620 130 700 103 780 84 870 71 958 64 1038 66 1108 77 1168 89 1258 115 1328 140 1398 167"/>
<path fill="none" stroke="#ff9f0a" stroke-width="7" d="M72 568 130 494 210 412 320 316 400 260 460 215 540 174 620 139"/>
<path fill="none" stroke="#e08a08" stroke-width="3" d="M620 137 700 109"/>
<g fill="none" stroke="#2b1c00" stroke-width="2.200" stroke-linejoin="round" opacity=".9">
<path d="M780 279 810 230 785 215 803 178 775 165 791 138 825 125 870 132M850 297 870 275M810 230 868 226M803 178 870 172M703 273 728 232 785 215M728 232 704 220 709 188 775 165M709 188 676 184 684 158 741 135 791 138M741 135V118L785 100 870 92M625 284 640 243 704 220M640 243 611 240 616 212 676 184M616 212 580 205 587 182 636 165 684 158M636 165 640 150 700 125 741 118M548 300 555 262 611 240M555 262 523 260 527 232 580 205M527 232 494 228 500 207 545 190 587 182M545 190 560 175 636 150M470 336 473 315 523 290 523 260M473 315 438 305 445 280 494 250 494 228M445 280 410 270 420 250 460 230 500 207M397 378V370L440 335 438 305M397 370 362 360V330L410 300V270M362 330 330 320 340 300 375 280 410 270M323 430V415L362 380V360M323 415 286 418 288 390 325 350 330 320M258 490 253 478 286 435V418M253 478 217 485 215 460 248 425 250 400 288 390M195 555 190 540 217 500V485M190 540 150 550 148 523 178 495 180 465 215 460M140 622 130 608 152 565 150 550M130 608 92 625 90 598 118 570 120 535 148 523M88 695 75 682 95 640 92 625M75 682 50 690M35 670 52 650 90 598M52 650 50 625 85 578 120 535M85 578 82 560 150 490 180 465M150 490 155 470 215 415 250 400M215 415 220 398 290 330 330 320M290 330 300 318 360 275 420 250M360 275 375 262 450 222 500 207M450 222 465 212 540 178M90 550 170 452 260 365 340 295 430 238M785 100 810 86M700 125 720 105M248 360 288 345 290 330"/>
<path transform="translate(858)" d="M303 859 385 856 410 888M385 856 398 811 368 771 300 779M368 771 376 727 427 720 458 757 451 807 398 811M451 807 485 845 478 886M485 845 538 840 565 872M538 840 547 793 598 787 635 825 631 865M635 825 683 818 710 850M683 818V770L725 765 761 797 763 838M761 797 830 780M547 793 510 751 458 757M510 751 515 704 564 697 598 735V787M598 735 647 731 683 770M647 731 646 686 688 680 725 716V765M725 716 785 706M427 720 432 674 480 667 515 704M480 667 481 619 529 613 566 652 564 697M566 652 611 646 646 686M611 646V605L650 602 688 640V680M688 640 742 635M376 727 346 690 288 703M346 690 352 647 398 637 432 674M398 637 401 590 446 582 481 619M446 582V536L491 529 529 568V613M529 568 573 564 611 605M573 564 574 526 613 524 650 565V602M650 565 706 560M352 647 320 613 268 628M320 613 323 570 363 557 401 590M363 557 365 509 409 501 446 536M409 501 408 459 451 448 491 486V529M491 486 537 484 574 526M537 484 535 452 574 448 613 490V524M613 490 660 492M323 570 286 540 240 556M286 540V494L326 480 365 509M326 480 325 434 366 422 408 459M366 422 365 380 407 373 450 410 451 448M450 410 496 408 535 452M496 408 494 376 535 375 577 418 574 448M577 418 630 425M286 494 247 468 207 486M247 468V420L282 406 325 434M282 406 280 359 320 349 365 380M320 349V307L363 299 410 335 407 373M410 335 453 336 494 376M453 336 460 306 501 311 543 352 535 375M543 352 595 360M247 420 205 403 165 425M205 403 201 354 237 341 280 359M237 341 233 295 272 282 320 307M272 282 271 242 317 235 364 268 363 299M364 268 411 269 460 306M411 269 419 240 468 248 508 289 501 311M508 289 565 297M201 354 155 343 110 370M155 343 145 299 181 283 233 295M181 283 174 238 216 221 271 242M216 221 214 184 268 176 320 205 317 235M320 205 374 206 419 240M374 206 383 184 440 187 478 234 468 248M478 234 545 250M145 299 98 291 58 328M98 291 82 254 121 227 174 238M121 227 103 187 152 169 214 184M152 169 148 134 210 125 272 148 268 176M272 148 337 152 383 184M337 152 355 138 433 160 455 187 440 187M455 187 538 215M82 254 32 252 0 285M32 252 7 225 42 187 103 187M42 187 13 160 32 135 88 125 148 134M88 125 90 100M207 102 210 125M207 102 245 95 350 117 355 138M350 117 400 122M433 160 445 158 538 195M0 100 45 102 90 100 130 92 120 75M130 92 207 102M245 95 250 82 310 92 360 110 430 128M20 83 45 75 120 75 180 68M0 130 32 135M7 225 0 232M13 160 0 170M400 135 470 155 535 178"/>
</g>
<g transform="translate(858)">
<path fill="#b67900" d="M540 167 580 172 640 215 720 305 770 385 850 490 760 475 652 456 625 425 598 362 570 297 546 240 538 200z"/>
<path fill="none" stroke="#2b1c00" stroke-width="2.200" d="M560 205 600 213M555 240 600 250 607 258 650 290 690 297M600 250 610 225M570 268 612 308 650 315M650 290 652 305 690 345 725 350M690 345 687 358 725 395 765 400M725 395 726 416 762 452 810 460M762 452 763 475M585 310 612 308 645 350 687 358M645 350V368L683 408 726 416M683 408 680 428 640 425M680 428 710 462M645 368 603 362M575 262 567 232"/>
<path fill="#f08400" d="M540 167 560 166 585 174 615 196 655 232 700 283 745 335 790 395 855 488 845 500 835 492 785 425 735 360 690 300 650 252 610 212 580 184 550 182z"/>
<path fill="none" stroke="#ffa21c" stroke-width="5" d="M585 176 655 234 745 337 852 490"/>
<path fill="none" stroke="url(#g4)" stroke-width="15" d="M541 170 539 197 546 238 570 295 598 360 632 425 667 495 705 562 745 635 785 705 848 810"/>
<path fill="none" stroke="#ffa01a" stroke-width="3" d="M626 430 700 567 780 710 840 810"/>
</g>
<path fill="#ffa20e" d="M76 732 95 695 140 622 195 557 258 488 325 428 395 380 470 335 545 302 622 286 697 278 775 281 858 312 908 330 963 368 1023 425 1068 487 1098 553 1126 628 1146 703 1157 778 1163 893H1150L1143 780 1130 700 1108 620 1088 560 1058 497 1008 428 953 375 898 340 858 325 770 300 697 295 625 302 545 322 470 355 400 398 330 450 262 510 205 575 150 650 90 740z"/>
<path fill="none" stroke="#ff8c0a" stroke-width="10" d="M770 290 858 317 905 334 957 371 1015 427 1062 491 1093 556 1118 626 1138 702 1150 780 1156 893"/>
<path fill="none" stroke="#9a5400" stroke-width="3" d="M78 730 97 693 142 620 197 556 260 487 327 427 397 379 472 333 547 301 622 285 697 277 775 280 858 309 910 329M953 376 1008 430 1057 498 1087 560 1107 620 1129 700 1142 780"/>
<path transform="translate(858)" stroke="#d03a00" stroke-width="2" d="M98 374 112 368M154 430 168 424M197 490 212 484M230 558 245 552M252 630 270 625M271 706 289 702M285 780 300 777M292 860 304 859M590 363 606 357M624 429 640 424M658 496 674 491M698 564 714 559M737 638 752 632M777 709 793 703M820 783 836 778"/>
<path fill="none" stroke="#35e6e6" stroke-width="4" d="M1150 894 1338 889 1488 868 1608 842 1704 814M1516 455 1618 476 1690 491"/>
<path fill="#35d9de" d="M17 660 28 658 42 692 70 725 80 740 72 758 45 742 25 718 15 690z"/>
<path fill="none" stroke="#35e6e6" stroke-width="7" stroke-dasharray="3 4" d="M64 578 25 640"/>
<path fill="none" stroke="#149aa8" stroke-width="3" stroke-dasharray="4 6" d="M20 675q2 50 50 78M28 670q5 40 46 70"/>
<path fill="#12e012" d="M15 634h18v20H15zM72 738h8l10 10-8 4v8H74l-8-8z"/>
<g>
<use href="#arr" x="1170" y="895" width="28" height="32"/><use href="#arr" x="1228" y="893" width="28" height="32"/><use href="#arr" x="1273" y="890" width="28" height="32"/><use href="#arr" x="1305" y="889" width="28" height="32"/><use href="#arr" x="1343" y="884" width="28" height="32"/><use href="#arr" x="1388" y="877" width="28" height="32"/><use href="#arr" x="1427" y="873" width="28" height="32"/><use href="#arr" x="1458" y="868" width="28" height="32"/><use href="#arr" x="1493" y="863" width="28" height="32"/><use href="#arr" x="1533" y="855" width="28" height="32"/><use href="#arr" x="1567" y="849" width="28" height="32"/><use href="#arr" x="1593" y="842" width="28" height="32"/><use href="#arr" x="1628" y="834" width="28" height="32"/><use href="#arr" x="1670" y="820" width="28" height="32"/>
<use href="#arr" x="1535" y="459" width="28" height="32"/><use href="#arr" x="1567" y="466" width="28" height="32"/><use href="#arr" x="1593" y="472" width="28" height="32"/><use href="#arr" x="1628" y="478" width="28" height="32"/><use href="#arr" x="1670" y="489" width="28" height="32"/>
<use href="#crs" x="1145" y="896" width="22" height="26"/><use href="#crs" x="1692" y="816" width="22" height="26"/><use href="#crs" x="1692" y="495" width="22" height="26"/><use href="#crs" x="1429" y="862" width="24" height="24"/>
</g>
<g class="axis"><path stroke="#1a1ad0" stroke-width="4" d="M88 868V820"/><path fill="#1a1ad0" d="M83 824l5-16 5 16z"/><path stroke="#10b030" stroke-width="3" d="M88 868 108 860"/><path fill="#10a020" d="M104 854l15 1-11 10z"/><path stroke="#d01818" stroke-width="4" d="M88 868 126 874"/><path fill="#d01818" d="M126 868l15 9-16 4z"/>
<text x="83" y="803" fill="#2020d8">Z</text><text x="120" y="858" fill="#18c838">Y</text><text x="147" y="884" fill="#d82020">X</text></g>
</svg>
</div>

<div class="panel">
<div class="phead"><h2>4.0 Resultados - Resumen</h2><svg><use href="#pin"/></svg><svg><use href="#clscap"/></svg></div>
<div class="bar" role="toolbar" aria-label="Tabla"><i class="pad"></i><button aria-label="Gráfico"><svg><use href="#tgr"/></svg></button><button aria-label="Bajar"><svg><use href="#tdn"/></svg></button><button aria-label="Subir"><svg><use href="#tdn"/></svg></button><button class="on" aria-label="Resultados en tabla"><svg><use href="#tcur"/></svg></button><button aria-label="Diagrama"><svg><use href="#tfad"/></svg></button><i class="sep"></i><button aria-label="Tabla anterior"><svg><use href="#tll"/></svg></button><button aria-label="Tabla siguiente"><svg><use href="#trr"/></svg></button><i class="sep"></i><button class="on" aria-label="Sincronizar"><svg><use href="#mouse"/></svg></button><button class="on" aria-label="Selección"><svg><use href="#mous2"/></svg></button><i class="sep"></i><button aria-label="Filas"><svg><use href="#rows"/></svg></button><button aria-label="Editar"><svg><use href="#edit"/></svg></button><i class="sep"></i>
<div class="combo small"><select aria-label="Combinación de carga"><option>CO101 - 1,80g</option></select></div><i class="sep"></i><button aria-label="Anterior"><svg><use href="#lt"/></svg></button><button aria-label="Siguiente"><svg><use href="#gt"/></svg></button><i class="sep"></i><button aria-label="Filtro"><svg><use href="#filt"/></svg></button><i class="sep"></i><button aria-label="Vista"><svg><use href="#link"/></svg></button><i class="sep"></i><button class="lite" aria-label="Ocultar"><svg><use href="#hide"/></svg></button><i class="sep"></i><button aria-label="Excel"><svg><use href="#xls"/></svg></button><i class="sep"></i><button aria-label="Informe"><svg><use href="#rep"/></svg></button></div>
<div class="sheet">
<table><colgroup><col class="c0"><col class="c1"><col class="c2"><col class="c3"><col class="c4"><col></colgroup>
<thead><tr class="abc"><th rowspan="2"></th><th class="sel">A</th><th>B</th><th>C</th><th>D</th><th class="off"></th></tr>
<tr class="names"><th>Descripción</th><th>Valor</th><th>Unidad</th><th>Comentario</th><th class="off"></th></tr></thead>
<tbody>
<tr class="grp"><th></th><td colspan="4"><button class="ex minus" aria-label="Contraer"></button><b>CO101 - 1,80g</b></td><td class="off"></td></tr>
<tr class="alt"><th></th><td>Carga total en dirección X</td><td>0.00</td><td>kN</td><td></td><td class="off"></td></tr>
<tr class="alt"><th></th><td>Suma de esfuerzos en apoyos en X</td><td>0.00</td><td>kN</td><td></td><td class="off"></td></tr>
<tr class="cur"><th></th><td>Carga total en dirección Y</td><td>0.00</td><td>kN</td><td></td><td class="off"></td></tr>
<tr><th></th><td>Suma de esfuerzos en apoyos en Y</td><td>0.00</td><td>kN</td><td></td><td class="off"></td></tr>
<tr class="alt"><th></th><td>Carga total en dirección Z</td><td>-214.33</td><td>kN</td><td></td><td class="off"></td></tr>
<tr class="alt"><th></th><td>Suma de esfuerzos en apoyos en Z</td><td>-214.33</td><td>kN</td><td>Desviación:&nbsp; 0.00 %</td><td class="off"></td></tr>
</tbody></table>
<div class="vbar"><svg viewBox="0 0 8 8"><path d="M2 5l2-2 2 2"/></svg><i class="thumb"></i><svg viewBox="0 0 8 8"><path d="M2 3l2 2 2-2"/></svg></div>
</div>
<div class="ttabs"><button class="act">Resultados - Resumen</button><button>Nudos - Esfuerzos en apoyos</button><button>Nudos - Deformaciones</button><button>Líneas - Esfuerzos en apoyos</button><button>Barras - Deformaciones locales</button><button>Barras - Deformaciones globales</button><button>Barras - Esfuerzos internos</button>
<div class="pager"><button disabled aria-label="Primera"><svg viewBox="0 0 8 8"><path d="M2 1v6H1V1zM6 1v6L3 4z"/></svg></button><button disabled aria-label="Anterior"><svg viewBox="0 0 8 8"><path d="M5 1v6L2 4z"/></svg></button><button aria-label="Siguiente"><svg viewBox="0 0 8 8"><path d="M3 1v6l3-3z"/></svg></button><button aria-label="Última"><svg viewBox="0 0 8 8"><path d="M2 1v6l3-3zM6 1h1v6H6z"/></svg></button></div></div>
</div>
</section>
</main>

<footer class="status"><span>Plano de trabajo</span><div class="modes"><button class="dn">FORZC</button><button>REJILLA</button><button class="dn">CARTES</button><button class="dn">REFENT</button><button>GLN</button><button class="dn">DXF</button></div><div class="info"><span>SC: Global XYZ</span><span>Plano: XY</span><span>X:&nbsp; -1.945 m</span><span>Y:&nbsp; 0.236 m</span><span>Z:&nbsp; 0.000 m</span></div></footer>
</body>
</html>
```
FILE: styles.css
```css
* { box-sizing: border-box; }
html, body { margin: 0; height: 100%; }
body {
  display: flex; flex-direction: column; overflow: hidden;
  font: 6px/9px Lato, "Open Sans", sans-serif; color: #111;
  text-rendering: geometricPrecision;
  background: #cdd3de; border-top: 1px solid #9c9c98; border-right: 1px solid #9aa0b0;
}
button { font: inherit; color: inherit; border: 0; padding: 0; margin: 0; background: none; }
h1, h2 { font: inherit; margin: 0; }
ul { list-style: none; margin: 0; padding: 0; }
.defs { position: absolute; width: 0; height: 0; }

.title { display: flex; align-items: center; height: 15px; padding-left: 4px; background: #fff; gap: 2px; }
.title .i { width: 8px; height: 8px; }
.caps { display: flex; margin-left: auto; }
.title .caps { gap: 17px; padding-right: 9px; }
.caps button { display: flex; }
.caps svg { width: 6px; height: 6px; }

.menu { display: flex; align-items: center; gap: 8px; height: 11px; padding-left: 5px; color: #333a48; background: #cfd4df; }
.menu .i { width: 8px; height: 8px; margin-right: -3px; }
.menu u { text-underline-offset: 0; }
.menu .mdi { gap: 4px; padding-right: 3px; }
.menu .mdi svg { width: 4px; height: 4px; }

.bars { display: flex; flex-direction: column; align-items: flex-start; gap: 1px; padding: 1px 2px 0; border-bottom: 1px solid #9fa3a8; }
.bar { display: flex; align-items: center; height: 12px; background: linear-gradient(#f1f4fa, #dde2ec); border-radius: 0 2px 2px 0; padding-right: 2px; }
.bar button { flex: none; display: flex; align-items: center; justify-content: center; width: 11px; height: 11px; }
.bar button svg { flex: none; width: 9px; height: 9px; }
.bar button.on { background: #fbd083; border: 1px solid #cc9a4e; }
.bar button.lite { background: #e6efe6; border: 1px solid #a8c4b0; }
.bar .dd { width: 18px; justify-content: flex-start; padding-left: 1px; gap: 2px; }
.bar .dd::after { content: ""; border: 2px solid transparent; border-top-color: #555c6c; border-bottom: 0; border-right-width: 1px; border-left-width: 1px; }
.grip { width: 3px; height: 8px; border-left: 1px dotted #8089a0; }
.sep { width: 3px; height: 8px; border-left: 1px solid #c0c6d2; margin-left: 1px; }
.tight .sep { width: 2px; }
.bar .sep.grip { width: 5px; border-left: 1px dotted #8089a0; }
.pad { width: 4px; }
.combo { position: relative; width: 110px; height: 10px; background: #fff; }
.combo.small { width: 98px; }
.combo select { width: 100%; height: 100%; padding: 0 2px; border: 0; appearance: none; background: none; font: inherit; color: #222; }
.combo::after { content: ""; position: absolute; right: 2px; top: 4px; border: 1px solid transparent; border-top: 2px solid #667; border-bottom: 0; pointer-events: none; }

.work { flex: 1; min-height: 0; display: flex; gap: 2px; padding-right: 1px; }
.navi { flex: 0 0 20%; min-width: 0; display: flex; flex-direction: column; padding: 0 3px 0 1px; }
.phead { display: flex; align-items: center; gap: 5px; flex: none; height: 10px; padding: 0 3px 0 1px; background: #b9c1ce; color: #3c4352; }
.phead h2 { margin-right: auto; }
.phead svg { width: 4px; height: 4px; }
.treebox { flex: 1; min-height: 0; display: flex; background: #fffff8; padding-left: 1px; }
.tree { flex: 1; min-width: 0; overflow: hidden; white-space: nowrap; padding: 2px 0 0 3px; }
.tree ul ul { padding-left: 1px; }
.tree li { position: relative; padding-left: 9px; }
.tree li::before { content: ""; position: absolute; left: 3px; top: 4px; width: 6px; border-top: 1px dotted #b8b8b0; }
.tree li::after { content: ""; position: absolute; left: 2px; top: 0; bottom: 0; border-left: 1px dotted #b8b8b0; }
.tree li:last-child::after { bottom: auto; height: 5px; }
.tree .root > li::after { display: none; }
.tree li svg { width: 7px; height: 7px; margin-right: 2px; vertical-align: -1px; }
.tree b { color: #000; }
.ex { width: 5px; height: 5px; border: 1px solid #b4bac4; background: linear-gradient(#6c82b0, #6c82b0) center / 3px 1px no-repeat, linear-gradient(#6c82b0, #6c82b0) center / 1px 3px no-repeat, #fff; }
.ex.minus { background: linear-gradient(#6c82b0, #6c82b0) center / 3px 1px no-repeat, #fff; }
.tree .ex { position: absolute; z-index: 1; left: 0; top: 2px; }
.vbar { flex: none; width: 8px; display: flex; flex-direction: column; align-items: center; background: #f0f0f0; }
.vbar svg, .hbar svg { flex: none; width: 8px; height: 8px; fill: none; stroke: #444; }
.vbar .thumb { width: 100%; background: #c9c9c9; margin: 5px 0 auto; height: 38%; }
.hbar { flex: none; display: flex; align-items: center; height: 9px; background: #f0f0f0; margin-right: 8px; padding: 0 1px; }
.hbar .thumb { width: 34%; height: 8px; background: #c9c9c9; margin-right: auto; }
.ntabs { display: flex; align-items: center; gap: 3px; height: 12px; margin-bottom: 1px; color: #35509a; }
.ntabs button { display: flex; align-items: center; gap: 1px; height: 11px; padding: 0 1px; }
.ntabs svg { width: 8px; height: 8px; }
.ntabs .act { background: #f6f8fc; border: 1px solid #b4bac8; border-top: 0; }

.right { flex: 1; min-width: 0; display: flex; flex-direction: column; gap: 3px; }
.view { flex: 1; min-height: 0; background: #fff; border-left: 1px solid #9a9aa8; overflow: hidden; }
.view svg { display: block; width: 100%; height: 100%; }
.axis { font: 16px "Liberation Sans", sans-serif; }

.panel { flex: none; background: #f0f0f0; padding-bottom: 9px; }
.panel .bar { height: 13px; border-radius: 0; border-bottom: 1px solid #a8acb4; }
.sheet { display: flex; font: 5px/7px "Liberation Sans", sans-serif; padding: 2px 1px 0; }
.sheet table { flex: 1; width: 0; table-layout: fixed; border-collapse: separate; border-spacing: 0; }
.c0 { width: 23px; } .c1 { width: 144px; } .c2 { width: 36px; } .c3 { width: 24px; } .c4 { width: 198px; }
.sheet th, .sheet td { height: 8px; padding: 0 2px; border-right: 1px solid #b4b4b4; border-bottom: 1px solid #c6c6c6; background: #fff; font-weight: 400; white-space: nowrap; text-align: left; }
.sheet thead th { background: #f0f0f0; text-align: center; }
.sheet .abc th { background: #dcdcdc; border-color: #8c8c8c; }
.sheet .abc .sel { background: #3296fa; color: #fff; }
.sheet tbody th { background: #dcdcdc; border-color: #909090; }
.sheet .alt td { background: #f7f9ff; }
.sheet td:nth-child(2) { padding-left: 13px; }
.sheet td:nth-child(3) { text-align: right; }
.sheet .grp td:nth-child(2) { padding-left: 1px; font: 700 6px/7px Lato, sans-serif; }
.sheet .grp .ex { margin-right: 1px; }
.sheet .cur th { background: #3296fa; }
.sheet .cur td:nth-child(2) { outline: 1px solid #777; outline-offset: -1px; }
.sheet tr .off.off.off { background: #f0f0f0; border-right: 0; border-bottom-color: #c6c6c6; }
.sheet .vbar .thumb { height: 8px; margin-top: 0; }
.ttabs { display: flex; height: 9px; margin-top: 5px; border-top: 1px solid #888; font: 5px/7px "Liberation Sans", sans-serif; }
.ttabs > button { padding: 0 4px; border-right: 1px solid #777; border-bottom: 1px solid #888; background: #ececec; white-space: nowrap; }
.ttabs > .act { background: #fff; border-bottom-color: #fff; padding-left: 2px; }
.pager { display: flex; margin-left: auto; }
.pager button { display: flex; align-items: center; width: 7px; background: #fafafa; border-right: 1px solid #aaa; }
.pager svg { width: 6px; height: 6px; }
.pager :disabled { fill: #aaa; }

.status { flex: none; display: flex; align-items: center; height: 10px; padding: 0 16px 0 2px; background: linear-gradient(#aab1bf, #c2c8d2); border-bottom: 1px solid #555; }
.status > * { flex: none; }
.modes { display: flex; gap: 2px; margin-left: 41%; font: 5px/6px "Liberation Sans", sans-serif; }
.modes button { padding: 0 1px; border: 1px solid transparent; }
.modes .dn { background: #a8aeb8; border-color: #555 #e8e8e8 #e8e8e8 #555; }
.info { display: grid; grid-template-columns: 45px 44px 37px 37px 28px; margin-left: auto; font: 5px/8px "Liberation Sans", sans-serif; white-space: nowrap; }
```
